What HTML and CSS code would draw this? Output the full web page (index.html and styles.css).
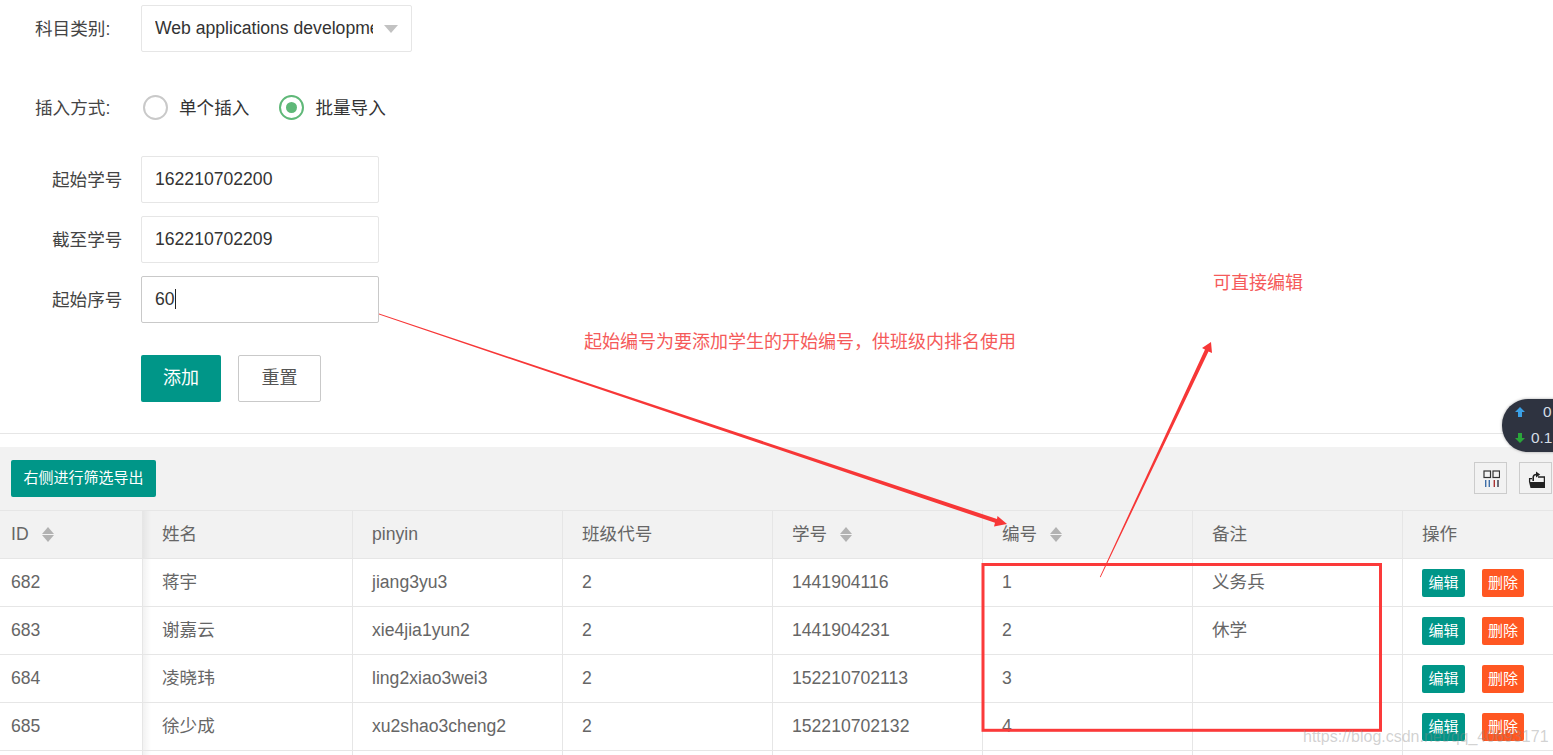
FILE: index.html
```html
<!DOCTYPE html>
<html lang="zh-CN">
<head>
<meta charset="utf-8">
<title>批量导入学生</title>
<link rel="stylesheet" href="styles.css">
</head>
<body>
<main class="page">
  <form class="form">
    <div class="row row-select">
      <span class="label label-wide">科目类别:</span>
      <div class="select"><span class="select-text">Web applications development</span><i class="select-arrow"></i></div>
    </div>
    <div class="row row-radio">
      <span class="label label-wide">插入方式:</span>
      <span class="radio"></span><span class="radio-text">单个插入</span>
      <span class="radio radio-on"></span><span class="radio-text">批量导入</span>
    </div>
    <div class="row row-input">
      <span class="label">起始学号</span>
      <div class="input">162210702200</div>
    </div>
    <div class="row row-input">
      <span class="label">截至学号</span>
      <div class="input">162210702209</div>
    </div>
    <div class="row row-input">
      <span class="label">起始序号</span>
      <div class="input input-focus">60<i class="caret"></i></div>
    </div>
    <div class="row row-actions">
      <span class="btn btn-primary">添加</span>
      <span class="btn btn-plain">重置</span>
    </div>
  </form>
  <hr class="divider">
  <div class="toolbar">
    <span class="btn-export">右侧进行筛选导出</span>
    <div class="tools">
      <span class="tool">
        <svg width="19" height="19" viewBox="0 0 19 19" fill="none">
          <rect x="3" y="2" width="6.5" height="6.5" stroke="#333" stroke-width="1.2"/>
          <rect x="12" y="2" width="6.5" height="6.5" stroke="#333" stroke-width="1.2"/>
          <path d="M4.7 11v7M8.3 11v7" stroke="#3f6fa8" stroke-width="1.4"/>
          <path d="M13.3 11v7" stroke="#a33" stroke-width="1.4"/>
          <path d="M17 11v7" stroke="#334" stroke-width="1.4"/>
        </svg>
      </span>
      <span class="tool">
        <svg width="19" height="19" viewBox="0 0 19 19" fill="none">
          <path d="M3 13h16v6H4.5z" fill="#222"/>
          <path d="M3.6 13V9.6h2.4M12 8h6.4v5" stroke="#222" stroke-width="1.3"/>
          <path d="M7.2 12V8.6C7.2 6.6 8.6 5.5 10.6 5.5" stroke="#222" stroke-width="1.6"/>
          <path d="M10 2.4l4.2 3.1L10 8.6z" fill="#222"/>
        </svg>
      </span>
    </div>
  </div>
  <div class="table-wrap">
    <table class="table">
      <colgroup>
        <col class="col-id"><col class="col"><col class="col"><col class="col"><col class="col"><col class="col"><col class="col"><col class="col">
      </colgroup>
      <thead>
        <tr>
          <th class="cell-id">ID<i class="sort"></i></th>
          <th class="cell-edge">姓名</th>
          <th>pinyin</th>
          <th>班级代号</th>
          <th>学号<i class="sort"></i></th>
          <th>编号<i class="sort"></i></th>
          <th>备注</th>
          <th>操作</th>
        </tr>
      </thead>
      <tbody>
        <tr>
          <td class="cell-id">682</td><td class="cell-edge">蒋宇</td><td>jiang3yu3</td><td>2</td><td>1441904116</td><td>1</td><td>义务兵</td>
          <td class="cell-ops"><span class="mini mini-edit">编辑</span><span class="mini mini-del">删除</span></td>
        </tr>
        <tr>
          <td class="cell-id">683</td><td class="cell-edge">谢嘉云</td><td>xie4jia1yun2</td><td>2</td><td>1441904231</td><td>2</td><td>休学</td>
          <td class="cell-ops"><span class="mini mini-edit">编辑</span><span class="mini mini-del">删除</span></td>
        </tr>
        <tr>
          <td class="cell-id">684</td><td class="cell-edge">凌晓玮</td><td>ling2xiao3wei3</td><td>2</td><td>152210702113</td><td>3</td><td></td>
          <td class="cell-ops"><span class="mini mini-edit">编辑</span><span class="mini mini-del">删除</span></td>
        </tr>
        <tr>
          <td class="cell-id">685</td><td class="cell-edge">徐少成</td><td>xu2shao3cheng2</td><td>2</td><td>152210702132</td><td>4</td><td></td>
          <td class="cell-ops"><span class="mini mini-edit">编辑</span><span class="mini mini-del">删除</span></td>
        </tr>
        <tr>
          <td class="cell-id"></td><td class="cell-edge"></td><td></td><td></td><td></td><td></td><td></td><td></td>
        </tr>
      </tbody>
    </table>
  </div>

  <svg class="marks" width="1553" height="755" viewBox="0 0 1553 755" fill="none">
    <polygon class="mark-fill" points="379,313.6 997,519 997.5,516 1007,524 994,526.5 995,522.8 379,314.6"/>
    <polygon class="mark-fill" points="1100.6,577.3 1208.5,351.5 1212,353 1211,342 1202,348 1205,349.5 1099.8,577"/>
    <rect class="mark-box" x="983" y="564.5" width="397.5" height="165.8"/>
  </svg>
  <p class="note note-left">起始编号为要添加学生的开始编号，供班级内排名使用</p>
  <p class="note note-right">可直接编辑</p>

  <div class="speed">
    <svg class="speed-up" width="10" height="10" viewBox="0 0 10 10"><path d="M5 0 10 5H7V10H3V5H0z" fill="#3ba0e6"/></svg>
    <span class="speed-a">0</span>
    <svg class="speed-down" width="10" height="10" viewBox="0 0 10 10"><path d="M5 10 10 5H7V0H3V5H0z" fill="#2aa63a"/></svg>
    <span class="speed-b">0.1</span>
  </div>
  <span class="watermark">https://blog.csdn.net/qq_40693171</span>
</main>
</body>
</html>
```
FILE: styles.css
```css
* { box-sizing: border-box; }
html, body { margin: 0; height: 755px; overflow: hidden; background: #fff; }
body { font-family: "Liberation Sans", "Noto Sans CJK SC", sans-serif; font-size: 17.6px; line-height: 24px; color: #333; }
.page { position: relative; width: 1553px; height: 755px; overflow: hidden; }

.form { padding-top: 5px; }
.row { display: flex; align-items: center; }
.row-select { height: 47px; }
.row-radio { height: 47px; margin-top: 32px; }
.row-input { height: 47px; margin-bottom: 13px; }
.row-radio + .row-input { margin-top: 25px; }
.row-actions { height: 47px; margin-top: 32px; padding-left: 141px; gap: 17px; }
.label { flex: none; width: 141px; padding-left: 52px; color: #444; }
.label-wide { padding-left: 35px; }

.select { display: flex; align-items: center; width: 271px; height: 47px; padding: 0 0 2px 13px; border: 1px solid #e6e6e6; border-radius: 2px; }
.select-text { width: 218px; overflow: hidden; white-space: nowrap; }
.select-arrow { margin: 2px 0 0 11px; border: 7.5px solid transparent; border-top: 8px solid #c2c2c2; border-bottom: 0; }

.radio { flex: none; width: 25px; height: 25px; margin-left: 2px; border: 2px solid #c9c9c9; border-radius: 50%; display: flex; align-items: center; justify-content: center; }
.radio-text { margin-left: 11px; margin-right: 30px; }
.radio-on { border-color: #5fb878; margin-left: 0; }
.radio-on::after { content: ""; width: 11px; height: 11px; border-radius: 50%; background: #5fb878; }

.input { display: flex; align-items: center; width: 238px; height: 47px; padding: 0 0 2px 13px; border: 1px solid #e6e6e6; border-radius: 2px; }
.input-focus { border-color: #c9c9c9; }
.caret { width: 1px; height: 20px; background: #222; }

.btn { display: flex; align-items: center; justify-content: center; height: 47px; padding-bottom: 2px; border-radius: 2px; font-size: 18px; }
.btn-primary { width: 80px; background: #009688; color: #fff; }
.btn-plain { width: 83px; border: 1px solid #c9c9c9; color: #555; }

.divider { margin: 31px 0 13px; border: 0; border-top: 1px solid #e6e6e6; }

.toolbar { display: flex; justify-content: space-between; align-items: center; height: 64px; padding: 0 1px 1px 11px; background: #f2f2f2; border-bottom: 1px solid #e6e6e6; }
.btn-export { display: flex; align-items: center; justify-content: center; width: 145px; height: 37px; border-radius: 2px; background: #009688; color: #fff; font-size: 15px; }
.tools { display: flex; gap: 12px; }
.tool { display: flex; align-items: center; justify-content: center; width: 33px; height: 32px; border: 1px solid #ccc; }

.table-wrap { width: 1553px; overflow: hidden; }
.table { width: 1613px; table-layout: fixed; border-collapse: separate; border-spacing: 0; color: #666; }
.col-id { width: 143px; }
.col { width: 210px; }
.table th, .table td { height: 48px; padding: 0 0 2px 19px; border-right: 1px solid #e6e6e6; border-bottom: 1px solid #e6e6e6; text-align: left; font-weight: 400; white-space: nowrap; }
.table th { background: #f2f2f2; }
.table .cell-id { padding-left: 11px; }
.table .cell-ops { padding-bottom: 0; }
.table .cell-edge { background-image: linear-gradient(to right, rgba(0,0,0,.05), rgba(0,0,0,0) 8px); }
.sort { display: inline-block; position: relative; width: 13px; height: 15px; margin-left: 13px; vertical-align: -2px; }
.sort::before, .sort::after { content: ""; position: absolute; left: 0; border-left: 6.5px solid transparent; border-right: 6.5px solid transparent; }
.sort::before { top: 0; border-bottom: 7px solid #b2b2b2; }
.sort::after { bottom: 0; border-top: 7px solid #b2b2b2; }

.mini { display: inline-block; width: 43px; height: 28px; line-height: 28px; border-radius: 2px; text-align: center; color: #fff; font-size: 15px; vertical-align: middle; }
.mini-edit { background: #009688; }
.mini-del { width: 42px; margin-left: 17px; background: #ff5722; }

.marks { position: absolute; left: 0; top: 0; pointer-events: none; }
.mark-fill { fill: #f73737; }
.mark-box { stroke: #fb3a3a; stroke-width: 3; }
.note { position: absolute; margin: 0; color: #f55a5a; font-size: 18px; line-height: 24px; white-space: nowrap; }
.note-left { left: 584px; top: 330px; }
.note-right { left: 1213px; top: 271px; }

.speed { position: absolute; left: 1502px; top: 399px; width: 90px; height: 53px; border-radius: 26px; background: #2e3340; box-shadow: 0 0 3px rgba(0,0,0,.35); font-size: 15.4px; line-height: 16px; color: #d5dde5; }
.speed-up, .speed-down, .speed-a, .speed-b { position: absolute; }
.speed-up { left: 13px; top: 8px; }
.speed-down { left: 13px; top: 34px; }
.speed-a { left: 41px; top: 5px; }
.speed-b { left: 29px; top: 31px; }

.watermark { position: absolute; left: 1303px; top: 726px; color: rgba(140,140,140,.4); font-size: 16px; line-height: 22px; white-space: nowrap; }
```
